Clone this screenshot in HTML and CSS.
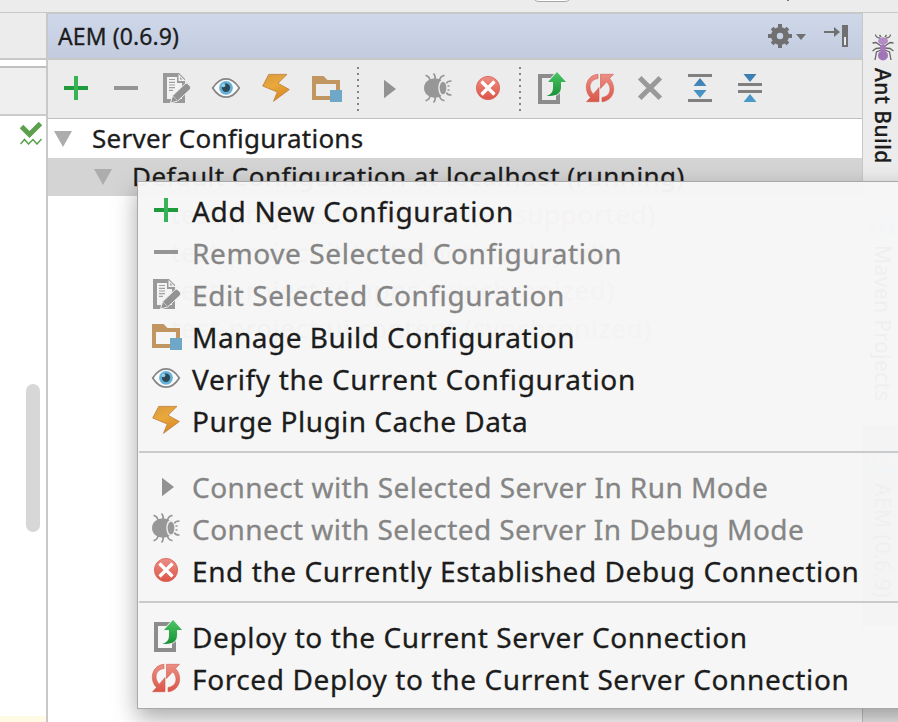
FILE: index.html
```html
<!DOCTYPE html>
<html lang="en">
<head>
<meta charset="utf-8">
<title>AEM (0.6.9)</title>
<link rel="stylesheet" href="styles.css">
</head>
<body>
<svg class="defs" width="0" height="0" aria-hidden="true">
  <defs>
    <linearGradient id="g-green" x1="0" y1="0" x2="0" y2="1"><stop offset="0" stop-color="#4cc566"/><stop offset="1" stop-color="#189235"/></linearGradient>
    <linearGradient id="g-bolt" x1="0" y1="0" x2="0.4" y2="1"><stop offset="0" stop-color="#d99a42"/><stop offset=".5" stop-color="#e9a93a"/><stop offset="1" stop-color="#d98a24"/></linearGradient>
    <linearGradient id="g-red" x1="0" y1="0" x2="0" y2="1"><stop offset="0" stop-color="#ec8f86"/><stop offset="1" stop-color="#dc5548"/></linearGradient>
    <linearGradient id="g-blue" x1="0" y1="0" x2="0" y2="1"><stop offset="0" stop-color="#3c7cb0"/><stop offset="1" stop-color="#4b9bcb"/></linearGradient>
    <symbol id="i-add" viewBox="0 0 32 32"><path fill="#1f9a3c" d="M4 14h24v4H4z"/><path fill="#37b256" d="M14 4h4v24h-4z"/></symbol>
    <symbol id="i-remove" viewBox="0 0 32 32"><path fill="#959595" d="M4 14h24v4H4z"/></symbol>
    <symbol id="i-edit" viewBox="0 0 32 32">
      <path fill="#999" d="M3 1h16l6 6v24H3z"/><path fill="#f3f3f3" d="M7 5h10v6h5v16H7z"/><path fill="#f3f3f3" d="M18.500 2v7h7z"/><path fill="#999" d="M20 5v2.500h2.500z"/>
      <path stroke="#a0a0a0" stroke-width="1.200" d="M9 7.500h6M9 10.300h6M9 13h6M9 15.700h6M9 18.400h4"/>
      <path fill="#929292" stroke="#f0f0f0" stroke-width="1" d="M10.500 31l2-7.200L25 11.800q1.600-1.300 3.200.3l2 2.200q1.400 1.700-.2 3.300L17.600 29z"/>
      <path stroke="#c4c4c4" stroke-width="1" d="M13 24l4.500 4.500"/>
    </symbol>
    <symbol id="i-eye" viewBox="0 0 32 32">
      <path fill="#fafafa" stroke="#858585" stroke-width="1.700" d="M2.700 16Q8.500 6.800 16 6.800T29.300 16Q23.500 25.200 16 25.200T2.700 16z"/>
      <circle cx="16" cy="15.800" r="6.900" fill="#63b1d9"/><circle cx="16" cy="15.800" r="4.200" fill="#2e4956"/><circle cx="13.400" cy="13.300" r="1.900" fill="#8bd0ed"/>
    </symbol>
    <symbol id="i-bolt" viewBox="0 0 32 32"><path fill="url(#g-bolt)" stroke="#bd7c3a" stroke-width=".8" d="M2.700 14l6-11.600h18.300L18 11.200l11.300 6.400L13.500 29.300 17.300 20z"/></symbol>
    <symbol id="i-folder" viewBox="0 0 32 32"><path fill="#c19660" fill-rule="evenodd" d="M2 4h11.500l4 4H30v20H2zM6 12v12h20V12z"/><path fill="#6fa7c9" d="M20 18h12v12H20z"/></symbol>
    <symbol id="i-play" viewBox="0 0 32 32"><path fill="#929292" d="M12 7.700v18.600L24 17z"/></symbol>
    <symbol id="i-bug" viewBox="0 0 32 32">
      <g fill="none" stroke="#979797" stroke-width="1.700"><path d="M8 8.500Q7.500 4 3.500 3.300M13 7q.8-3-1.500-5.500M17.500 8.500Q18 4 22.500 3.300M8 23.500Q7.500 28 3.500 28.700M13 25q.8 3-1.500 5.500M17.500 23.500Q18 28 22.500 28.700M24.500 11.500Q25 9 29.500 9M24.500 20.500Q25 23 29.500 23M25.500 14h2M25.500 18h2"/></g>
      <ellipse cx="13" cy="16" rx="11" ry="9.800" fill="#979797"/><ellipse cx="20.500" cy="16" rx="4.200" ry="8" fill="#ececec"/><ellipse cx="21" cy="16" rx="3.300" ry="6.300" fill="#979797"/>
    </symbol>
    <symbol id="i-stop" viewBox="0 0 32 32"><circle cx="16" cy="16" r="11.600" fill="url(#g-red)" stroke="#d95c50" stroke-width=".8"/><path stroke="#fff" stroke-width="3.300" d="M9.500 9.500l13 13M22.500 9.500l-13 13"/></symbol>
    <symbol id="i-deploy" viewBox="0 0 32 32"><path fill="none" stroke="#8c8c8c" stroke-width="4" d="M6 4h18v26H6z"/><path fill="url(#g-green)" stroke="#f0f0f0" stroke-width="1.600" paint-order="stroke" d="M23 0l9 10h-5v5Q27 25 12.500 23.800 19 22 19 16v-6h-5z"/></symbol>
    <symbol id="i-redeploy" viewBox="0 0 32 32">
      <path fill="url(#g-red)" stroke="#cf5a4e" stroke-width=".6" d="M14 2.300v4.200C5.500 7.500 3.500 16.500 9.300 22.200L15 15.500v14.200H2.500l4-4.200C-1.500 17 2.500 3 14 2.300z"/>
      <path fill="url(#g-red)" stroke="#cf5a4e" stroke-width=".6" d="M18 29.700v-4.200c8.500-1 10.500-10 4.700-15.700L16.500 16.500V2.300h13l-4 4.200C33.500 15 29.500 29 18 29.700z"/>
    </symbol>
    <symbol id="i-cross" viewBox="0 0 32 32"><path stroke="#999" stroke-width="5" d="M5.700 5.700l20.600 20.600M26.300 5.700L5.700 26.300"/></symbol>
    <symbol id="i-expand" viewBox="0 0 32 32"><path fill="#808080" d="M4 2h24v3H4zM4 27h24v3H4z"/><path fill="url(#g-blue)" d="M16 6l6.500 8h-13zM9.500 18h13L16 26z"/></symbol>
    <symbol id="i-collapse" viewBox="0 0 32 32"><path fill="#808080" d="M4 11h24v3H4zM4 18h24v3H4z"/><path fill="url(#g-blue)" d="M9.500 2h13L16 10zM16 22l6.500 8h-13z"/></symbol>
  </defs>
</svg>

<div class="window">
  <header class="topbar"><i class="tab-edge"></i><i class="tick"></i></header>
  <div class="body">
    <aside class="editor">
      <div class="editor-top"></div>
      <div class="editor-gap"></div>
      <div class="editor-tabs"></div>
      <div class="gutter">
        <svg class="check" viewBox="0 0 22 24"><path fill="none" stroke="#5c9f4d" stroke-width="5" d="M1.500 5.500l8 8L20.500 2.500"/><path fill="none" stroke="#5c9f4d" stroke-width="1.500" d="M.5 23l4-4.500 4 4.500 4.500-4.500 4 4.500 4.500-5"/></svg>
        <div class="thumb"></div>
      </div>
      <div class="caret-line"></div>
    </aside>
    <main class="panel">
      <div class="title">
        <span>AEM (0.6.9)</span>
        <svg class="gear" viewBox="0 0 38 24"><g fill="#707070"><circle cx="12" cy="12" r="9"/><path d="M10 0h4v24h-4zM0 10h24v4H0z"/><path d="M10 .8h4v22.400h-4zM.8 10h22.400v4H.8z" transform="rotate(45 12 12)"/><path d="M28 10h10l-5 6z"/></g><circle cx="12" cy="12" r="3.200" fill="#c9d2e4"/></svg>
        <svg class="hide" viewBox="0 0 24 22"><path fill="#707070" d="M0 6h10V2l6 5-6 5V8H0zM18 0h6v22h-6z"/><path fill="#e4e8f0" d="M20 12h2v8h-2z"/></svg>
      </div>
      <div class="toolbar">
        <svg class="icon"><use href="#i-add"/></svg>
        <svg class="icon"><use href="#i-remove"/></svg>
        <svg class="icon"><use href="#i-edit"/></svg>
        <svg class="icon"><use href="#i-eye"/></svg>
        <svg class="icon"><use href="#i-bolt"/></svg>
        <svg class="icon"><use href="#i-folder"/></svg>
        <i class="dots"></i>
        <svg class="icon"><use href="#i-play"/></svg>
        <svg class="icon"><use href="#i-bug"/></svg>
        <svg class="icon"><use href="#i-stop"/></svg>
        <i class="dots"></i>
        <svg class="icon"><use href="#i-deploy"/></svg>
        <svg class="icon"><use href="#i-redeploy"/></svg>
        <svg class="icon"><use href="#i-cross"/></svg>
        <svg class="icon"><use href="#i-expand"/></svg>
        <svg class="icon"><use href="#i-collapse"/></svg>
      </div>
      <div class="tree">
        <div class="row root"><i class="arrow"></i><span>Server Configurations</span></div>
        <div class="row server"><i class="arrow"></i><span>Default Configuration at localhost (running)</span></div>
        <div class="row module"><span>test-project.it.launcher <em>(unsupported)</em></span></div>
        <div class="row module"><span>test-project.it.tests <em>(not deployed)</em></span></div>
        <div class="row module"><span>test-project.ui.apps <em>(synchronized)</em></span></div>
        <div class="row module"><span>test-project.ui.content <em>(synchronized)</em></span></div>
      </div>
    </main>
    <nav class="strip">
      <div class="tool ant">
        <svg class="ant-icon" viewBox="0 0 22 27"><path fill="none" stroke="#666" stroke-width="1.300" d="M8 4Q4 4 3.500.5M14 4q4 0 4.500-3.500M9 3L7.500 1M13 3l1.500-2M9 12L4 8.500.5 9M13 12l5-3.500 3.500.5M9 14L4 14.500.5 17M13 14l5 .5 3.500 2.500M9 16l-4.500 2L3 26M13 16l4.500 2L19 26"/><ellipse cx="11" cy="7" rx="5" ry="3.700" fill="#b58bc6"/><ellipse cx="11" cy="13.700" rx="3" ry="3.500" fill="#a878bd"/><ellipse cx="11" cy="21.500" rx="5" ry="5" fill="#a174b8"/></svg>
        <span>Ant Build</span>
      </div>
      <div class="tool maven"><b>m</b><span>Maven Projects</span></div>
      <div class="tool aem"><b>HW</b><span>AEM (0.6.9)</span></div>
    </nav>
  </div>
</div>

<div class="menu">
  <ul>
    <li class="s1"><svg class="icon"><use href="#i-add"/></svg><span>Add New Configuration</span></li>
    <li class="s2 off"><svg class="icon"><use href="#i-remove"/></svg><span>Remove Selected Configuration</span></li>
    <li class="s3 off"><svg class="icon"><use href="#i-edit"/></svg><span>Edit Selected Configuration</span></li>
    <li class="s4"><svg class="icon"><use href="#i-folder"/></svg><span>Manage Build Configuration</span></li>
    <li class="s5"><svg class="icon"><use href="#i-eye"/></svg><span>Verify the Current Configuration</span></li>
    <li class="s6"><svg class="icon"><use href="#i-bolt"/></svg><span>Purge Plugin Cache Data</span></li>
  </ul>
  <ul>
    <li class="s7 off"><svg class="icon"><use href="#i-play"/></svg><span>Connect with Selected Server In Run Mode</span></li>
    <li class="s8 off"><svg class="icon"><use href="#i-bug"/></svg><span>Connect with Selected Server In Debug Mode</span></li>
    <li class="s9"><svg class="icon"><use href="#i-stop"/></svg><span>End the Currently Established Debug Connection</span></li>
  </ul>
  <ul>
    <li class="s10"><svg class="icon"><use href="#i-deploy"/></svg><span>Deploy to the Current Server Connection</span></li>
    <li class="s11"><svg class="icon"><use href="#i-redeploy"/></svg><span>Forced Deploy to the Current Server Connection</span></li>
  </ul>
</div>
</body>
</html>
```
FILE: styles.css
```css
* { box-sizing: border-box; }
body {
  margin: 0;
  width: 898px;
  height: 722px;
  overflow: hidden;
  position: relative;
  background: #ececec;
  color: #1c1c1c;
  font-family: "Noto Sans", "Open Sans", sans-serif;
  -webkit-text-stroke: .3px currentColor;
}
.defs { position: absolute; }
.window { display: flex; flex-direction: column; height: 722px; }

.topbar { height: 12px; flex: none; position: relative; overflow: hidden; }
.tab-edge {
  position: absolute; left: 532px; top: -12px; width: 40px; height: 14px;
  border: 1px solid #a5a5a5; border-radius: 7px; background: #fff;
}
.tick { position: absolute; left: 787px; top: 0; width: 2px; height: 1px; background: #777; }

.body { display: flex; flex: 1; min-height: 0; }

.editor { width: 46px; display: flex; flex-direction: column; border-top: 1px solid #c8c8c8; }
.editor-top { height: 45px; flex: none; }
.editor-gap { height: 10px; background: #fff; border-top: 2px solid #c8c8c8; border-bottom: 2px solid #c0c0c0; flex: none; }
.editor-tabs { height: 48px; background: #efefef; border-bottom: 2px solid #cbcbcb; flex: none; }
.gutter { flex: 1; background: #fff; display: flex; flex-direction: column; align-items: flex-end; padding: 5px 4px 0 0; }
.check { width: 22px; height: 24px; flex: none; }
.thumb { width: 14px; height: 148px; border-radius: 7px; background: #d7d7d7; margin: 239px 2px 0 0; }
.caret-line { height: 6px; background: #fffae3; }

.panel { width: 817px; display: flex; flex-direction: column; border: solid #c8c8c8; border-width: 2px 1px 0 2px; background: #fff; }
.title {
  height: 46px; flex: none; display: flex; align-items: center;
  padding: 0 14px 0 10px;
  background: linear-gradient(#cfd8e9, #c3ccdf);
  border-bottom: 2px solid #c8c8c8;
  font-size: 23px; letter-spacing: .1px;
}
.title span { flex: 1; padding-bottom: 1px; }
.gear { width: 38px; height: 24px; margin-right: 18px; }
.hide { width: 24px; height: 22px; }

.toolbar { height: 59px; flex: none; display: flex; gap: 18px; padding: 12px 0 0 12px; background: #ececec; border-bottom: 1px solid #bfbfbf; }
.icon { width: 32px; height: 32px; flex: none; display: block; }
.dots {
  width: 2px; height: 44px; margin: -5px -5px 0 -3px;
  background: repeating-linear-gradient(#858585 0 2px, transparent 2px 6px);
}

.tree { flex: 1; padding-top: 1px; font-size: 26px; }
.row { height: 38px; display: flex; align-items: center; white-space: nowrap; }
.row span { line-height: 36px; padding-bottom: 2px; }
.arrow { border: solid transparent; border-width: 16px 9px 0; border-top-color: #adadad; flex: none; }
.root { padding-left: 6px; letter-spacing: .25px; }
.root span { margin-left: 20px; }
.server { padding-left: 46px; background: #d4d4d4; letter-spacing: .47px; }
.server span { margin-left: 20px; }
.module { padding-left: 123px; letter-spacing: .7px; color: #666; }
.module em { font-style: normal; color: #b07070; }

.strip { width: 35px; display: flex; flex-direction: column; border-top: 1px solid #c8c8c8; font-size: 20px; }
.tool { width: 35px; display: flex; flex-direction: column; align-items: center; flex: none; padding-left: 5px; }
.tool span { writing-mode: vertical-rl; line-height: 26px; white-space: nowrap; }
.ant { height: 190px; padding-top: 21px; }
.ant-icon { width: 22px; height: 27px; flex: none; }
.ant span { margin-top: 7px; font-weight: 500; font-size: 21px; letter-spacing: .45px; }
.maven { height: 223px; padding-top: 3px; }
.maven b { font: italic bold 32px/36px "Noto Sans", sans-serif; color: #a4c8ec; }
.maven span { font-size: 21px; margin-top: 3px; letter-spacing: .4px; }
.aem { height: 200px; padding-top: 22px; background: #b0b0b0; }
.aem b { font-size: 17px; line-height: 26px; color: #f0c8a0; background: #80a8d0; }
.aem span { margin-top: 9px; font-size: 21px; letter-spacing: .5px; }

.menu {
  position: absolute; left: 137px; top: 181px; width: 790px; height: 528px;
  border: 1px solid #a9a9a9;
  background: rgba(246, 246, 246, .973);
  background-clip: padding-box;
  padding: 9px 0 0 1px;
  box-shadow: 0 9px 22px rgba(0, 0, 0, .34);
  font-size: 28px;
}
.menu ul { list-style: none; margin: 0; padding: 0; }
.menu ul + ul { margin-top: 8px; border-top: 2px solid #cacaca; padding-top: 14px; }
.menu li { height: 42px; display: flex; padding: 3px 0 0 11px; white-space: nowrap; }
.menu li span { margin-left: 10px; line-height: 34px; }
.menu .off { color: #858585; }
.s1 { letter-spacing: .71px; }
.s2 { letter-spacing: .6px; }
.s3 { letter-spacing: .59px; }
.s4 { letter-spacing: .48px; }
.s5 { letter-spacing: .68px; }
.s6 { letter-spacing: .46px; }
.s7 { letter-spacing: .45px; }
.s8 { letter-spacing: .43px; }
.s9 { letter-spacing: .59px; }
.s10 { letter-spacing: .58px; }
.s11 { letter-spacing: .61px; }
```
